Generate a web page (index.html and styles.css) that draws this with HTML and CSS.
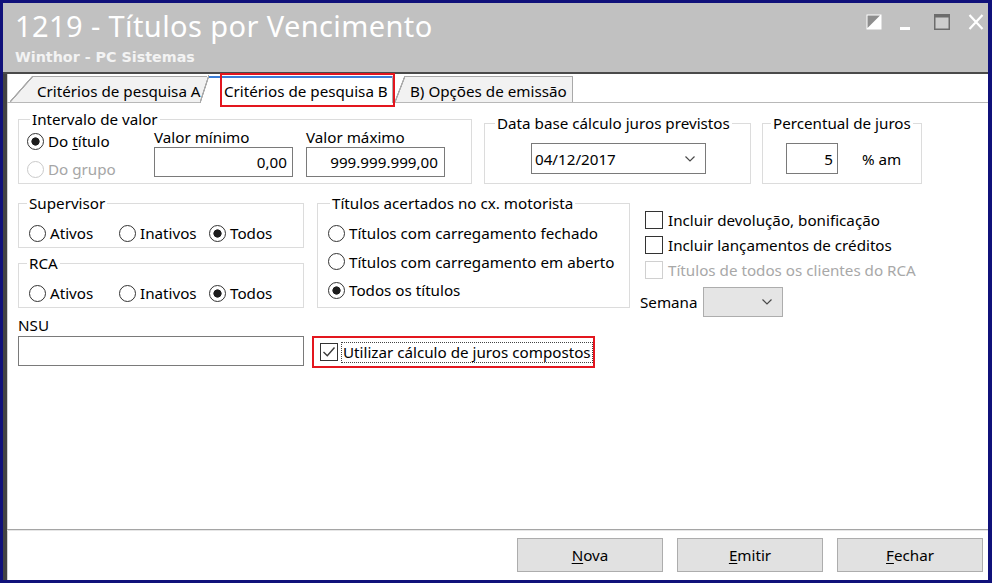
FILE: index.html
```html
<!DOCTYPE html>
<html lang="pt-BR">
<head>
<meta charset="utf-8">
<title>1219 - Títulos por Vencimento</title>
<link rel="stylesheet" href="styles.css">
</head>
<body>
<div class="window">
  <div class="titlebar">
    <div class="caption">
      <h1>1219 - Títulos por Vencimento</h1>
      <div class="subtitle">Winthor - PC Sistemas</div>
    </div>
    <div class="controls">
      <!-- skin, minimize, maximize, close -->
      <svg class="ctl-skin" width="16" height="16" viewBox="0 0 16 16">
        <rect x="0.5" y="0.5" width="15" height="15" fill="#fff"/>
        <polygon points="1.5,1.5 14,1.5 1.5,14" fill="#8e8e8e"/>
      </svg>
      <svg class="ctl-min" width="16" height="16" viewBox="0 0 16 16">
        <rect x="3" y="13" width="10" height="3" fill="#fff"/>
      </svg>
      <svg class="ctl-max" width="16" height="16" viewBox="0 0 16 16">
        <rect x="0.75" y="0.75" width="14.5" height="14.5" fill="#cdcdcd" stroke="#6c6c6c" stroke-width="1.5"/>
        <rect x="0" y="0" width="16" height="3.5" fill="#6c6c6c"/>
      </svg>
      <svg class="ctl-close" width="16" height="16" viewBox="0 0 16 16">
        <path d="M1.5 1 L14.5 15 M14.5 1 L1.5 15" stroke="#fff" stroke-width="2.2" fill="none"/>
      </svg>
    </div>
  </div>

  <div class="client">
    <div class="tabstrip">
      <div class="tab tab-first">Critérios de pesquisa A</div>
      <div class="tab tab-active">Critérios de pesquisa B</div>
      <div class="tab tab-last">B) Opções de emissão</div>
    </div>

    <div class="page">
      <div class="row1">
        <fieldset class="grp grp-interval">
          <legend>Intervalo de valor</legend>
          <div class="interval-body">
            <div class="origin">
              <div class="radio on"><span class="dot"></span><span>Do <u>t</u>ítulo</span></div>
              <div class="radio off"><span class="dot"></span><span>Do <u>g</u>rupo</span></div>
            </div>
            <div class="bound">
              <div class="cap">Valor mínimo</div>
              <div class="field num">0,00</div>
            </div>
            <div class="bound">
              <div class="cap">Valor máximo</div>
              <div class="field num wide">999.999.999,00</div>
            </div>
          </div>
        </fieldset>

        <fieldset class="grp grp-date">
          <legend>Data base cálculo juros previstos</legend>
          <div class="combo date-combo">
            <span>04/12/2017</span>
            <svg width="10" height="6" viewBox="0 0 10 6"><path d="M0.5 0.5 L5 5 L9.5 0.5" fill="none" stroke="#4a4a4a" stroke-width="1.2"/></svg>
          </div>
        </fieldset>

        <fieldset class="grp grp-rate">
          <legend>Percentual de juros</legend>
          <div class="rate-body">
            <div class="field num rate-field">5</div>
            <span>% am</span>
          </div>
        </fieldset>
      </div>

      <div class="row2">
        <div class="col-left">
          <fieldset class="grp grp-small">
            <legend>Supervisor</legend>
            <div class="choices">
              <div class="radio"><span class="dot"></span><span>Ativos</span></div>
              <div class="radio"><span class="dot"></span><span>Inativos</span></div>
              <div class="radio on"><span class="dot"></span><span>Todos</span></div>
            </div>
          </fieldset>
          <fieldset class="grp grp-small">
            <legend>RCA</legend>
            <div class="choices">
              <div class="radio"><span class="dot"></span><span>Ativos</span></div>
              <div class="radio"><span class="dot"></span><span>Inativos</span></div>
              <div class="radio on"><span class="dot"></span><span>Todos</span></div>
            </div>
          </fieldset>
          <div class="nsu-cap">NSU</div>
          <div class="field nsu-field"></div>
        </div>

        <div class="col-mid">
          <fieldset class="grp grp-paid">
            <legend>Títulos acertados no cx. motorista</legend>
            <div class="stack">
              <div class="radio"><span class="dot"></span><span>Títulos com carregamento fechado</span></div>
              <div class="radio"><span class="dot"></span><span>Títulos com carregamento em aberto</span></div>
              <div class="radio on"><span class="dot"></span><span>Todos os títulos</span></div>
            </div>
          </fieldset>
          <div class="compound">
            <span class="box">
              <svg width="16" height="16" viewBox="0 0 16 16"><path d="M2.5 8 L6.3 11.8 L13.5 3.5" fill="none" stroke="#3a3a3a" stroke-width="1.4"/></svg>
            </span>
            <span class="focus">Utilizar cálculo de juros compostos</span>
          </div>
        </div>

        <div class="col-right">
          <div class="checks">
            <div class="check"><span class="box"></span><span>Incluir devolução, bonificação</span></div>
            <div class="check"><span class="box"></span><span>Incluir lançamentos de créditos</span></div>
            <div class="check off"><span class="box"></span><span>Títulos de todos os clientes do RCA</span></div>
          </div>
          <div class="week">
            <span class="lbl">Semana</span>
            <div class="combo week-combo">
              <span></span>
              <svg width="10" height="6" viewBox="0 0 10 6"><path d="M0.5 0.5 L5 5 L9.5 0.5" fill="none" stroke="#4a4a4a" stroke-width="1.2"/></svg>
            </div>
          </div>
        </div>
      </div>
    </div>

    <div class="footer">
      <div class="btn"><span><u>N</u>ova</span></div>
      <div class="btn"><span><u>E</u>mitir</span></div>
      <div class="btn"><span><u>F</u>echar</span></div>
    </div>
  </div>
</div>
</body>
</html>
```

FILE: styles.css
```css
* {
    box-sizing: border-box;
}

body {
    margin: 0;
    font-family: "Noto Sans", "DejaVu Sans", sans-serif;
    font-size: 15.2px;
    color: #000;
    background: #fff;
}

u {
    text-underline-offset: 2px;
}

.window {
    width: 992px;
    height: 583px;
    border: 3px solid #10117a;
    border-right-width: 4px;
    display: flex;
    flex-direction: column;
    background: #fff;
}

/* title bar */
.titlebar {
    height: 71px;
    flex: none;
    background: #c1c1c1;
    border-bottom: 2px solid #4a4a4a;
    display: flex;
    justify-content: space-between;
}

.caption {
    padding: 7px 0 0 12px;
    color: #fff;
}

.caption h1 {
    margin: 0;
    font-size: 29px;
    font-weight: 400;
    letter-spacing: 0.4px;
    line-height: 32px;
}

.subtitle {
    margin-top: 6px;
    font-family: "DejaVu Sans", sans-serif;
    font-size: 14.3px;
    font-weight: 700;
    line-height: 18px;
    color: #f3f3f3;
}

.controls {
    display: flex;
    align-items: flex-start;
    padding: 11px 4px 0 0;
}

.controls svg {
    display: block;
}

.ctl-skin { margin-right: 15px; }
.ctl-min { margin-right: 21px; }
.ctl-max { margin-right: 18px; }

/* client area */
.client {
    flex: 1;
    display: flex;
    flex-direction: column;
    border-left: 4px solid #434343;
    box-shadow: inset 1px 0 #d2d2d2;
}

/* tabs */
.tabstrip {
    height: 29px;
    flex: none;
    display: flex;
    align-items: flex-end;
    padding-left: 26px;
    border-bottom: 1px solid #b8b8b8;
    position: relative;
    z-index: 0;
}

.tab {
    --fill: #f2f2f2;
    --run: 10px;
    position: relative;
    height: 26px;
    background: var(--fill);
    border-top: 1px solid #a9a9a9;
    border-right: 1px solid #a9a9a9;
    line-height: 20px;
    padding-top: 4px;
    white-space: nowrap;
}

/* slanted left edge */
.tab::before {
    content: "";
    position: absolute;
    right: 100%;
    top: -1px;
    bottom: 0;
    width: var(--run);
    background: linear-gradient(to bottom right, transparent calc(50% - 1px), #a9a9a9 calc(50% - 0.5px), #a9a9a9 calc(50% + 0.5px), var(--fill) calc(50% + 1px));
}

.tab-first {
    --run: 23px;
    width: 174px;
    padding-left: 4px;
    border-right: none;
}

.tab-active {
    --fill: #fff;
    --run: 9px;
    z-index: 1;
    width: 184px;
    height: 27px;
    margin: 0 0 -1px 2px;
    padding-left: 15px;
    padding-top: 5px;
    border-top: none;
    box-shadow: inset 0 2px #3b7dd8;
}

.tab-active::after {
    content: "";
    position: absolute;
    left: 11px;
    right: -3px;
    top: -3px;
    bottom: -4px;
    border: 2px solid #e3161e;
}

.tab-last {
    width: 168px;
    margin-left: 12px;
    padding-left: 5px;
}

/* page content */
.page {
    flex: 1;
    padding: 7px 0 0 11px;
}

.grp {
    margin: 0;
    padding: 0;
    min-width: 0;
    border: 1px solid #dcdcdc;
}

.grp legend {
    padding: 0 2px;
    margin-left: 8px;
    line-height: 18px;
}

.row1 {
    display: flex;
    align-items: flex-start;
}

.grp-interval {
    width: 454px;
    height: 74px;
}

.grp-interval legend {
    margin-left: 11px;
}

.interval-body {
    display: flex;
    padding-left: 8px;
}

.origin {
    width: 127px;
    padding-top: 4px;
    display: flex;
    flex-direction: column;
    gap: 10px;
}

.bound {
    width: 139px;
}

.bound + .bound {
    margin-left: 13px;
}

.cap {
    height: 19px;
    line-height: 18px;
}

.field {
    height: 30px;
    border: 1px solid #7a7a7a;
    background: #fff;
    display: flex;
    align-items: center;
}

.field.num {
    justify-content: flex-end;
    padding-right: 5px;
}

.field.wide {
    padding-right: 6px;
}

.grp-date {
    width: 267px;
    height: 70px;
    margin: 4px 0 0 12px;
}

.grp-date legend {
    margin-left: 10px;
}

.combo {
    display: flex;
    align-items: center;
    justify-content: space-between;
    border: 1px solid #7a7a7a;
    background: #fff;
    padding: 0 10px 0 3px;
}

.combo svg {
    display: block;
}

.date-combo {
    width: 175px;
    height: 31px;
    margin: 11px 0 0 46px;
}

.grp-rate {
    width: 160px;
    height: 70px;
    margin: 4px 0 0 11px;
}

.rate-body {
    display: flex;
    align-items: center;
    gap: 24px;
    margin: 11px 0 0 23px;
}

.rate-field {
    width: 52px;
    height: 31px;
}

.field.rate-field {
    padding-right: 4px;
}

/* radios and checks */
.radio {
    display: flex;
    align-items: center;
    height: 18px;
    white-space: nowrap;
}

.radio .dot {
    width: 17px;
    height: 17px;
    flex: none;
    margin-right: 4px;
    border-radius: 50%;
    border: 1px solid #333;
    background: #fff;
}

.radio.on .dot {
    background: radial-gradient(circle, #1c1c1c 0 3.8px, #fff 4.4px);
}

.radio.off {
    color: #a6a6a6;
}

.radio.off .dot {
    border-color: #cacaca;
}

.box {
    width: 18px;
    height: 18px;
    flex: none;
    border: 1px solid #333;
    background: #fff;
    display: flex;
    align-items: center;
    justify-content: center;
}

.row2 {
    display: flex;
    margin-top: 10px;
}

.col-left {
    width: 286px;
}

.grp-small {
    height: 54px;
}

.grp-small + .grp-small {
    margin-top: 6px;
}

.choices {
    display: flex;
    padding: 12px 0 0 10px;
}

.choices .radio {
    width: 90px;
}

.nsu-cap {
    margin-top: 8px;
    line-height: 18px;
}

.nsu-field {
    margin-top: 2px;
}

.col-mid {
    width: 313px;
    margin-left: 13px;
}

.grp-paid {
    height: 114px;
}

.grp-paid legend {
    margin-left: 12px;
}

.stack {
    display: flex;
    flex-direction: column;
    gap: 10.5px;
    padding: 12px 0 0 10px;
}

.compound {
    width: 283px;
    height: 32px;
    margin: 28px 0 0 -5px;
    border: 2px solid #e3161e;
    display: flex;
    align-items: center;
    padding-left: 6px;
}

.compound .box {
    margin-right: 3px;
}

.focus {
    border: 1px dotted #444;
    line-height: 19px;
    padding: 0 1px;
    white-space: nowrap;
}

.col-right {
    margin-left: 10px;
}

.checks {
    padding: 13px 0 0 5px;
}

.check {
    display: flex;
    align-items: center;
    height: 25px;
    white-space: nowrap;
}

.check .box {
    margin-right: 5px;
}

.check.off {
    color: #a8a8a8;
}

.check.off .box {
    border-color: #d0d0d0;
}

.week {
    display: flex;
    align-items: center;
    margin-top: 5px;
}

.week .lbl {
    width: 63px;
}

.week-combo {
    width: 80px;
    height: 30px;
    background: #e5e5e5;
    border-color: #adadad;
}

/* bottom buttons */
.footer {
    height: 51px;
    flex: none;
    border-top: 1px solid #a5a5a5;
    box-shadow: inset 0 1px #e6e6e6;
    display: flex;
    justify-content: flex-end;
    gap: 14px;
    padding: 8px 5px 0 0;
}

.btn {
    width: 146px;
    height: 34px;
    background: #e1e1e1;
    border: 1px solid #adadad;
    display: flex;
    align-items: center;
    justify-content: center;
}
```
